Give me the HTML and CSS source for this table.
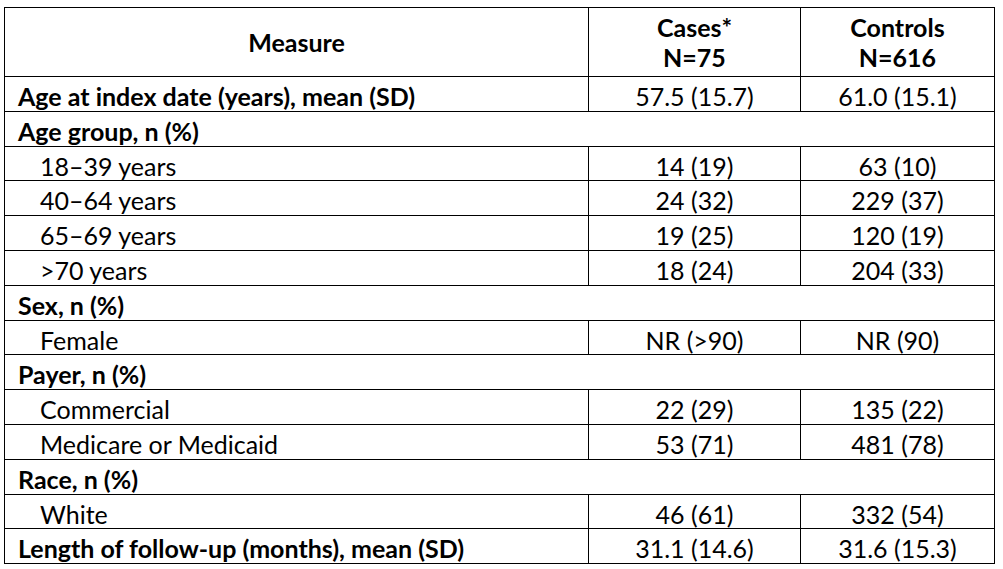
FILE: index.html
```html
<!DOCTYPE html>
<html>
<head>
<meta charset="utf-8">
<link rel="stylesheet" href="styles.css">
</head>
<body>
<table class="tbl">
  <colgroup>
    <col class="c1"><col class="c2"><col class="c3">
  </colgroup>
  <thead>
    <tr class="head">
      <th>Measure</th>
      <th>Cases*<br>N=75</th>
      <th>Controls<br>N=616</th>
    </tr>
  </thead>
  <tbody>
    <tr><td class="b">Age at index date (years), mean (SD)</td><td class="v">57.5 (15.7)</td><td class="v">61.0 (15.1)</td></tr>
    <tr><td class="b" colspan="3">Age group, n (%)</td></tr>
    <tr><td class="i">18–39 years</td><td class="v">14 (19)</td><td class="v">63 (10)</td></tr>
    <tr><td class="i">40–64 years</td><td class="v">24 (32)</td><td class="v">229 (37)</td></tr>
    <tr><td class="i">65–69 years</td><td class="v">19 (25)</td><td class="v">120 (19)</td></tr>
    <tr><td class="i">&gt;70 years</td><td class="v">18 (24)</td><td class="v">204 (33)</td></tr>
    <tr><td class="b" colspan="3">Sex, n (%)</td></tr>
    <tr><td class="i">Female</td><td class="v">NR (&gt;90)</td><td class="v">NR (90)</td></tr>
    <tr><td class="b" colspan="3">Payer, n (%)</td></tr>
    <tr><td class="i">Commercial</td><td class="v">22 (29)</td><td class="v">135 (22)</td></tr>
    <tr><td class="i">Medicare or Medicaid</td><td class="v">53 (71)</td><td class="v">481 (78)</td></tr>
    <tr><td class="b" colspan="3">Race, n (%)</td></tr>
    <tr><td class="i">White</td><td class="v">46 (61)</td><td class="v">332 (54)</td></tr>
    <tr><td class="b">Length of follow-up (months), mean (SD)</td><td class="v">31.1 (14.6)</td><td class="v">31.6 (15.3)</td></tr>
  </tbody>
</table>
</body>
</html>
```
FILE: styles.css
```css
html, body {
  margin: 0;
  background: #ffffff;
}
body {
  padding: 7px 0 0 4px;
  font-family: Lato, "Open Sans", sans-serif;
  font-size: 25px;
  color: #000;
}
.tbl {
  border-collapse: collapse;
  table-layout: fixed;
  width: 990px;
}
.c1 { width: 584px; }
.c2 { width: 212px; }
.c3 { width: 194px; }
.tbl th, .tbl td {
  border: 1px solid #000;
}
.tbl th {
  font-weight: 700;
  text-align: center;
  vertical-align: middle;
  padding: 0 6px;
  height: 68px;
  line-height: 30px;
}
.tbl td {
  vertical-align: top;
  padding: 5px 13px 0;
  height: 28.8px;
  line-height: 28px;
  white-space: nowrap;
}
.b { font-weight: 700; }
.tbl td.i { padding-left: 35px; }
.v { text-align: center; }
```
